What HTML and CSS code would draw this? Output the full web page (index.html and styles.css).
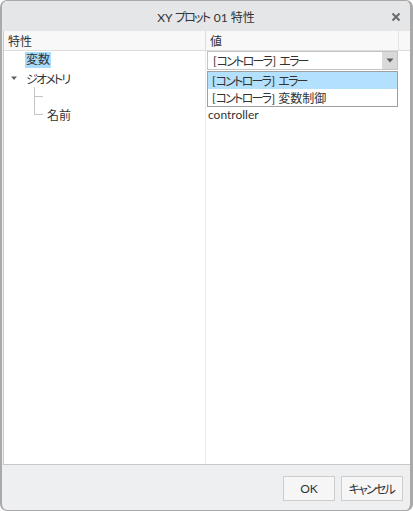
FILE: index.html
```html
<!DOCTYPE html>
<html lang="ja">
<head>
<meta charset="utf-8">
<link rel="stylesheet" href="styles.css">
</head>
<body>
<div class="dialog">
  <div class="titlebar">
    <span class="title">XY <span class="k">プロット</span> 01 特性</span>
    <span class="close">
      <svg width="10" height="10" viewBox="0 0 10 10"><path d="M1.5 1.5 L8.5 8.5 M8.5 1.5 L1.5 8.5" stroke="#6a6a6a" stroke-width="2"/></svg>
    </span>
  </div>
  <div class="panel">
    <div class="header">
      <div class="hcell name">特性</div>
      <div class="hcell value">値</div>
      <div class="hcell spacer"></div>
    </div>
    <div class="body">
      <div class="col names">
        <div class="row"><span class="ind1"></span><span class="sel">変数</span></div>
        <div class="row"><span class="arrow">
          <svg width="8" height="6" viewBox="0 0 8 6"><path d="M1 1.5 L7 1.5 L4 5 Z" fill="#606060"/></svg>
        </span><span class="k">ジオメトリ</span></div>
        <div class="row"><span class="tree"><span class="tl first"></span></span></div>
        <div class="row"><span class="tree"><span class="tl last"></span></span><span>名前</span></div>
      </div>
      <div class="col values">
        <div class="row first">
          <div class="combo">
            <span class="ctext">[<span class="k">コントローラ</span>] <span class="k">エラー</span></span>
            <span class="cbtn"><svg width="8" height="5" viewBox="0 0 8 5"><path d="M0.5 0.5 L7.5 0.5 L4 4.5 Z" fill="#5a5a5a"/></svg></span>
          </div>
        </div>
        <div class="row"></div>
        <div class="row"></div>
        <div class="row text">controller</div>
        <div class="dropdown">
          <div class="opt hl">[<span class="k">コントローラ</span>] <span class="k">エラー</span></div>
          <div class="opt">[<span class="k">コントローラ</span>] 変数制御</div>
        </div>
      </div>
    </div>
  </div>
  <div class="footer">
    <button class="btn ok">OK</button>
    <button class="btn cancel"><span class="k">キャンセル</span></button>
  </div>
</div>
</body>
</html>
```

FILE: styles.css
```css
html, body {
  margin: 0;
  padding: 0;
  background: #ffffff;
}
body {
  font-family: "Lato", "Noto Sans CJK JP", sans-serif;
  font-feature-settings: "palt";
  font-size: 12px;
  color: #333333;
}
.k {
  letter-spacing: -1.8px;
  margin-right: 1.5px;
}
.dialog {
  width: 413px;
  height: 511px;
  box-sizing: border-box;
  border: 1px solid #a9a9a9;
  border-left-width: 2px;
  border-right-width: 3px;
  border-radius: 7px;
  background: #eeeff1;
  display: flex;
  flex-direction: column;
  overflow: hidden;
}
.titlebar {
  height: 30px;
  flex: none;
  background: #e4e6e8;
  display: flex;
  align-items: center;
  justify-content: center;
  position: relative;
}
.title {
  font-size: 12px;
  color: #333;
}
.close {
  position: absolute;
  right: 9px;
  top: 11px;
  width: 10px;
  height: 10px;
  display: flex;
}
.panel {
  height: 433px;
  flex: none;
  margin: 0 0 0 1px;
  background: #ffffff;
  border-left: 1px solid #c8c8c8;
  border-bottom: 1px solid #c8c8c8;
  display: flex;
  flex-direction: column;
}
.header {
  height: 19px;
  flex: none;
  display: flex;
  background: #f8f8f8;
  border-bottom: 1px solid #dcdcdc;
}
.hcell {
  display: flex;
  align-items: center;
  padding-left: 4px;
  color: #333;
}
.hcell.name {
  width: 197px;
  border-right: 1px solid #dcdcdc;
}
.hcell.value {
  width: 188px;
  border-right: 1px solid #e4e4e4;
}
.hcell.spacer {
  flex: 1;
  padding: 0;
}
.body {
  flex: 1;
  display: flex;
}
.col.names {
  width: 201px;
  border-right: 1px solid #ececec;
}
.col.values {
  flex: 1;
  position: relative;
  padding-left: 1px;
}
.row {
  height: 18px;
  display: flex;
  align-items: center;
  white-space: nowrap;
}
.names .row {
  padding-left: 6px;
}
.ind1 {
  width: 15px;
  flex: none;
}
.sel {
  background: #a9dcfb;
  padding: 0 1px;
  line-height: 16px;
}
.arrow {
  width: 16px;
  flex: none;
  display: flex;
  align-items: center;
}
.tree {
  width: 37px;
  height: 18px;
  flex: none;
  position: relative;
}
.tl {
  position: absolute;
  left: 24px;
  width: 8px;
  border-left: 1px solid #c4c4c4;
  border-bottom: 1px solid #c4c4c4;
}
.tl.first {
  top: 0;
  height: 9px;
}
.tl.last {
  top: -9px;
  height: 18px;
}
.values .row.first {
  align-items: flex-start;
}
.values .row.text {
  padding-left: 1px;
}
.combo {
  width: 191px;
  height: 19px;
  flex: none;
  box-sizing: border-box;
  border: 1px solid #c4c4c4;
  display: flex;
  align-items: stretch;
  background: #fff;
}
.ctext {
  flex: 1;
  padding-left: 5px;
  display: flex;
  align-items: center;
  white-space: pre;
}
.cbtn {
  width: 15px;
  background: #d9d9d9;
  display: flex;
  align-items: center;
  justify-content: center;
}
.dropdown {
  position: absolute;
  left: 1px;
  top: 20px;
  width: 191px;
  box-sizing: border-box;
  border: 1px solid #9f9f9f;
  background: #fff;
}
.opt {
  height: 17px;
  display: flex;
  align-items: center;
  padding-left: 4px;
  white-space: pre;
}
.opt.hl {
  background: #b3e0fc;
}
.footer {
  flex: 1;
  display: flex;
  justify-content: flex-end;
  align-items: flex-start;
  gap: 6px;
  padding: 11px 7px 0 0;
}
.btn {
  font-family: "Lato", "Noto Sans CJK JP", sans-serif;
  font-feature-settings: "palt";
  font-size: 12px;
  color: #333;
  height: 25px;
  background: #f6f6f6;
  border: 1px solid #cdcdcd;
  border-radius: 0;
  padding: 0;
}
.btn.ok {
  width: 52px;
}
.btn.cancel {
  width: 62px;
}
```
